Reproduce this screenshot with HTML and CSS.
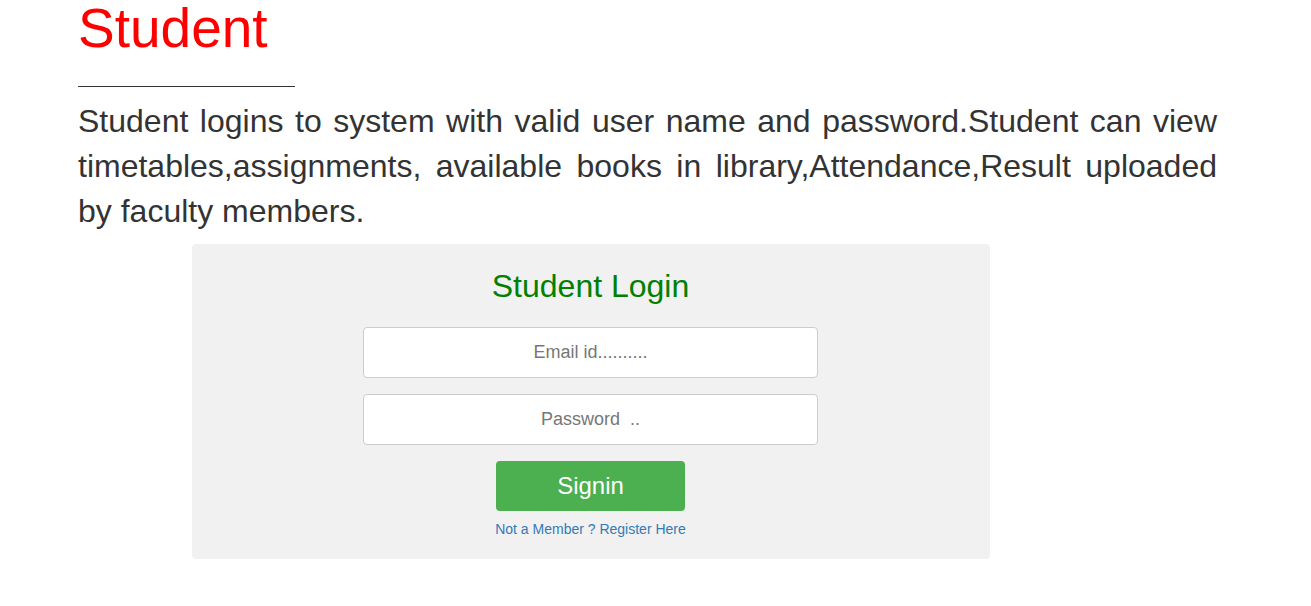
FILE: index.html
```html
<!DOCTYPE html>
<html>
<head>
<meta charset="utf-8">
<title>Student</title>
<link rel="stylesheet" href="styles.css">
</head>
<body>
<div class="page">
  <h1 class="title">Student</h1>
  <div class="rule"></div>
  <p class="intro">Student logins to system with valid user name and password.Student can view timetables,assignments, available books in library,Attendance,Result uploaded by faculty members.</p>
  <div class="login-wrap">
    <form class="login-box">
      <h2 class="login-title">Student Login</h2>
      <input class="field" type="text" placeholder="Email id..........">
      <input class="field" type="password" placeholder="Password &nbsp;..">
      <button class="btn" type="button">Signin</button>
      <a class="reg-link" href="#">Not a Member ? Register Here</a>
    </form>
  </div>
</div>
</body>
</html>
```

FILE: styles.css
```css
* { box-sizing: border-box; }
html, body {
  margin: 0;
  padding: 0;
  background: #fff;
  font-family: "Liberation Sans", Arial, sans-serif;
  color: #333;
}
.page {
  padding-left: 78px;
  width: 1217px;
}
.title {
  margin: 0;
  font-size: 55px;
  line-height: 57px;
  font-weight: normal;
  color: #ff0000;
}
.rule {
  margin-top: 29px;
  width: 217px;
  height: 1px;
  background: #333;
}
.intro {
  margin: 12px 0 0;
  font-size: 32px;
  line-height: 45px;
  text-align: justify;
}
.login-wrap {
  margin-top: 10px;
  padding-left: 114px;
}
.login-box {
  width: 798px;
  height: 315px;
  background: #f1f1f1;
  border-radius: 4px;
  padding: 25px 0 0 171px;
  margin: 0;
  display: flex;
  flex-direction: column;
  align-items: flex-start;
}
.login-title {
  align-self: stretch;
  width: 455px;
  text-align: center;
  margin: 0 0 23px;
  font-size: 32px;
  line-height: 35px;
  font-weight: normal;
  color: #008000;
}
.field {
  width: 455px;
  height: 51px;
  border: 1px solid #ccc;
  border-radius: 4px;
  background: #fff;
  font-family: "Liberation Sans", Arial, sans-serif;
  font-size: 18px;
  text-align: center;
  color: #555;
  margin-bottom: 16px;
  padding: 0 12px;
  outline: none;
}
.field::placeholder {
  color: #777;
  white-space: pre;
}
.btn {
  align-self: flex-start;
  margin-left: 133px;
  width: 189px;
  height: 50px;
  border: none;
  border-radius: 4px;
  background: #4caf50;
  color: #fff;
  font-family: "Liberation Sans", Arial, sans-serif;
  font-size: 24px;
  cursor: pointer;
}
.reg-link {
  width: 455px;
  text-align: center;
  margin-top: 8px;
  font-size: 14px;
  line-height: 20px;
  color: #337ab7;
  text-decoration: none;
}
```
